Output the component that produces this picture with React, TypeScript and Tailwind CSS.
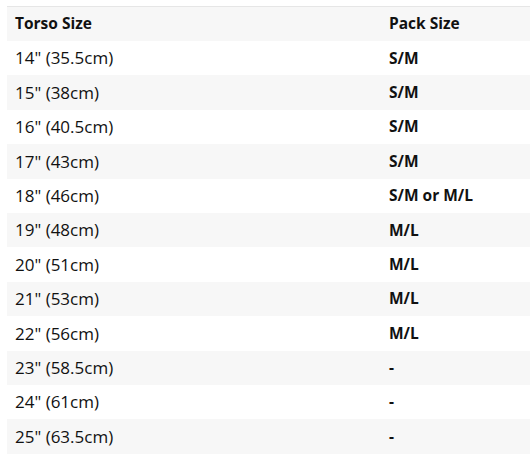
const rows: [string, string][] = [
  ['14" (35.5cm)', "S/M"],
  ['15" (38cm)', "S/M"],
  ['16" (40.5cm)', "S/M"],
  ['17" (43cm)', "S/M"],
  ['18" (46cm)', "S/M or M/L"],
  ['19" (48cm)', "M/L"],
  ['20" (51cm)', "M/L"],
  ['21" (53cm)', "M/L"],
  ['22" (56cm)', "M/L"],
  ['23" (58.5cm)', "-"],
  ['24" (61cm)', "-"],
  ['25" (63.5cm)', "-"],
];

export default function App() {
  return (
    <div className="w-[530px] h-[455px] bg-white pt-[6px] pl-[7px] text-[17px] text-[#111]"
      style={{ fontFamily: '"Open Sans", "Noto Sans", sans-serif' }}>
      <div className="border-t border-[#e6e6e6]">
        <div className="flex items-center h-[34px] bg-[#f7f7f7] font-bold text-[15.5px]">
          <div className="w-[382px] pl-[8px]">Torso Size</div>
          <div>Pack Size</div>
        </div>
        {rows.map(([torso, pack], i) => (
          <div key={torso}
            className={`flex items-center h-[34.4px] ${i % 2 === 1 ? "bg-[#f7f7f7]" : "bg-white"}`}>
            <div className="w-[382px] pl-[8px]">{torso}</div>
            <div className="font-bold text-[15.5px]">{pack}</div>
          </div>
        ))}
      </div>
    </div>
  );
}
